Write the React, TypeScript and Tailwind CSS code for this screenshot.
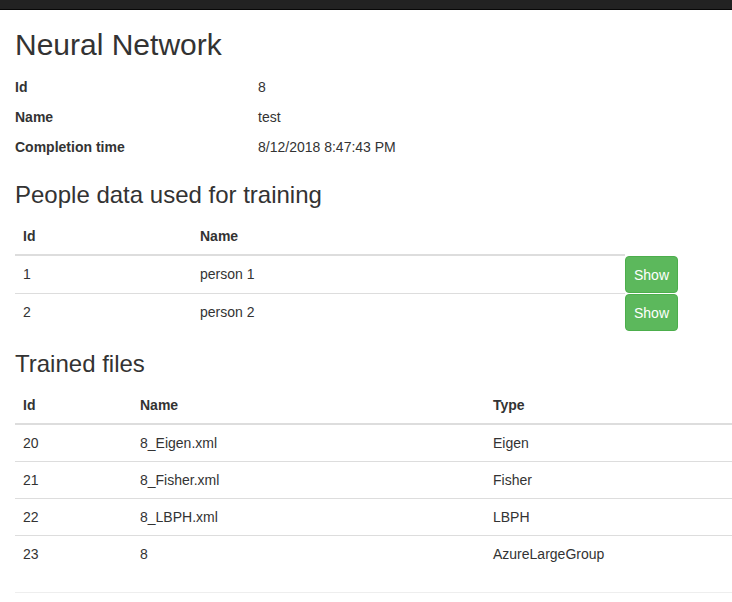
import React from "react";

const people = [
  { id: "1", name: "person 1" },
  { id: "2", name: "person 2" },
];

const files = [
  { id: "20", name: "8_Eigen.xml", type: "Eigen" },
  { id: "21", name: "8_Fisher.xml", type: "Fisher" },
  { id: "22", name: "8_LBPH.xml", type: "LBPH" },
  { id: "23", name: "8", type: "AzureLargeGroup" },
];

export default function App() {
  return (
    <div className="min-h-[602px] overflow-hidden bg-white text-[14px] leading-[20px] text-[#333] font-['Liberation_Sans',Arial,Helvetica,sans-serif]">
      <div className="h-[10px] border-b border-[#080808] bg-[#222]" />
      <div className="pl-[15px]">
        <h2 className="mt-[18px] mb-[16px] text-[30px] leading-[33px] font-normal">
          Neural Network
        </h2>

        <div className="flex flex-col gap-[10px]">
          <div className="flex">
            <div className="w-[243px] font-bold">Id</div>
            <div>8</div>
          </div>
          <div className="flex">
            <div className="w-[243px] font-bold">Name</div>
            <div>test</div>
          </div>
          <div className="flex">
            <div className="w-[243px] font-bold">Completion time</div>
            <div>8/12/2018 8:47:43 PM</div>
          </div>
        </div>

        <h3 className="mt-[25px] mb-[10px] text-[24px] leading-[26px] font-normal">
          People data used for training
        </h3>

        <div className="flex w-[663px] flex-col">
          <div className="flex">
            <div className="flex w-[610px] border-b-2 border-[#ddd] font-bold">
              <div className="w-[177px] p-[8px]">Id</div>
              <div className="flex-1 p-[8px]">Name</div>
            </div>
            <div className="w-[53px]" />
          </div>
          {people.map((p, i) => (
            <div key={p.id} className="flex">
              <div
                className={
                  i === 0
                    ? "flex w-[610px]"
                    : "flex w-[610px] border-t border-[#ddd]"
                }
              >
                <div className="w-[177px] p-[8px]">{p.id}</div>
                <div className="flex-1 p-[8px]">{p.name}</div>
              </div>
              <button
                className={
                  i === 0
                    ? "flex h-[37px] w-[53px] items-center justify-center rounded-[4px] border border-[#4cae4c] bg-[#5cb85c] text-[14px] leading-[20px] text-white"
                    : "mt-[1px] flex h-[37px] w-[53px] items-center justify-center rounded-[4px] border border-[#4cae4c] bg-[#5cb85c] text-[14px] leading-[20px] text-white"
                }
              >
                Show
              </button>
            </div>
          ))}
        </div>

        <h3 className="mt-[20px] mb-[10px] text-[24px] leading-[26px] font-normal">
          Trained files
        </h3>

        <div className="flex w-full flex-col">
          <div className="flex border-b-2 border-[#ddd] font-bold">
            <div className="w-[117px] p-[8px]">Id</div>
            <div className="w-[353px] p-[8px]">Name</div>
            <div className="flex-1 p-[8px]">Type</div>
          </div>
          {files.map((f, i) => (
            <div
              key={f.id}
              className={i === 0 ? "flex" : "flex border-t border-[#ddd]"}
            >
              <div className="w-[117px] p-[8px]">{f.id}</div>
              <div className="w-[353px] p-[8px]">{f.name}</div>
              <div className="flex-1 p-[8px]">{f.type}</div>
            </div>
          ))}
        </div>

        <hr className="mt-[20px] border-t border-[#eee]" />
      </div>
    </div>
  );
}
